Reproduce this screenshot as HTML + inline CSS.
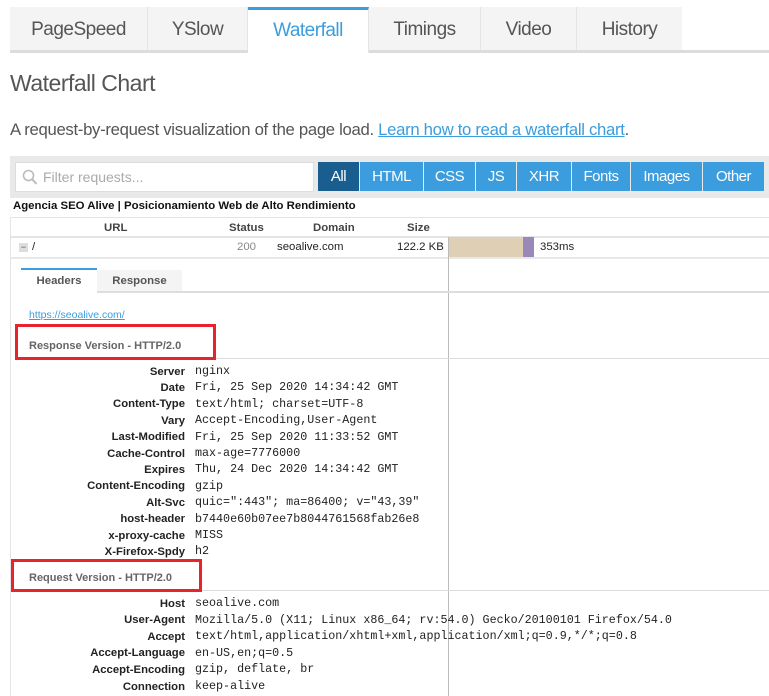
<!DOCTYPE html>
<html><head><style>
*{margin:0;padding:0;box-sizing:border-box}
body{width:769px;height:696px;overflow:hidden;background:#fff;font-family:"Liberation Sans",sans-serif;color:#333;position:relative}
.a{position:absolute}
.tab{position:absolute;top:7px;height:43px;background:#f4f4f4;border-right:1px solid #e4e4e4;font-size:19px;color:#555;text-align:center;line-height:46px;letter-spacing:-0.5px}
.btn{position:absolute;top:162px;height:29px;background:#3b9ddd;color:#fff;font-size:15px;text-align:center;line-height:29px;letter-spacing:-0.5px}
.k{position:absolute;left:0;width:185px;text-align:right;font-weight:bold;font-size:11.3px;color:#222;margin-top:1.5px}
.v{position:absolute;left:195px;font-family:"Liberation Mono",monospace;font-size:11.7px;color:#222;white-space:nowrap}
.sec{position:absolute;font-weight:bold;font-size:11px;color:#666}
.red{position:absolute;border:3px solid #e8232e}
</style></head><body>
<div class="a" style="left:10px;top:50px;width:759px;height:3px;background:#dcdcdc"></div>
<div class="tab" style="left:10px;width:138px">PageSpeed</div>
<div class="tab" style="left:148px;width:100px">YSlow</div>
<div class="tab" style="left:248px;width:121px;background:#fff;border-top:3px solid #3b9ddd;height:46px;line-height:42px;color:#3b9ddd">Waterfall</div>
<div class="tab" style="left:369px;width:112px">Timings</div>
<div class="tab" style="left:481px;width:96px">Video</div>
<div class="tab" style="left:577px;width:105px;border-right:none">History</div>
<div class="a" style="left:10px;top:70px;font-size:23px;color:#555;letter-spacing:-0.5px">Waterfall Chart</div>
<div class="a" style="left:10px;top:120px;font-size:16.7px;color:#555;letter-spacing:-0.3px">A request-by-request visualization of the page load. <span style="color:#3b9ddd;text-decoration:underline">Learn how to read a waterfall chart</span>.</div>
<div class="a" style="left:10px;top:156px;width:759px;height:42px;background:#e8eaea"></div>
<div class="a" style="left:15px;top:162px;width:299px;height:30px;background:#fff;border:1px solid #ddd"></div>
<svg class="a" style="left:22px;top:169px" width="16" height="17"><circle cx="6.5" cy="6.5" r="5" fill="none" stroke="#bbb" stroke-width="1.6"/><line x1="10" y1="10" x2="14.5" y2="15" stroke="#bbb" stroke-width="2"/></svg>
<div class="a" style="left:43px;top:169px;font-size:14px;color:#aaa">Filter requests...</div>
<div class="btn" style="left:318px;width:41px;background:#1a5e8f">All</div>
<div class="btn" style="left:360px;width:63px">HTML</div>
<div class="btn" style="left:424px;width:51px">CSS</div>
<div class="btn" style="left:476px;width:40px">JS</div>
<div class="btn" style="left:517px;width:54px">XHR</div>
<div class="btn" style="left:572px;width:58px">Fonts</div>
<div class="btn" style="left:631px;width:71px">Images</div>
<div class="btn" style="left:703px;width:61px">Other</div>
<div class="a" style="left:13px;top:200px;font-size:11.4px;font-weight:bold;color:#111">Agencia SEO Alive | Posicionamiento Web de Alto Rendimiento</div>
<div class="a" style="left:10px;top:217px;width:759px;height:1px;background:#e4e4e4"></div>
<div class="a" style="left:10px;top:217px;width:1px;height:479px;background:#e4e4e4"></div>
<div class="a" style="left:104px;top:222px;font-size:11.4px;font-weight:bold;color:#444">URL</div>
<div class="a" style="left:229px;top:222px;font-size:11.4px;font-weight:bold;color:#444">Status</div>
<div class="a" style="left:313px;top:222px;font-size:11.4px;font-weight:bold;color:#444">Domain</div>
<div class="a" style="left:407px;top:222px;font-size:11.4px;font-weight:bold;color:#444">Size</div>
<div class="a" style="left:10px;top:236px;width:759px;height:2px;background:#e4e4e4"></div>
<div class="a" style="left:19px;top:243px;width:9px;height:9px;background:#ddd;font-size:9px;line-height:8px;text-align:center;color:#555">−</div>
<div class="a" style="left:32px;top:241px;font-size:11.4px;color:#222">/</div>
<div class="a" style="left:237px;top:241px;font-size:11.4px;color:#888">200</div>
<div class="a" style="left:277px;top:241px;font-size:11.4px;color:#222">seoalive.com</div>
<div class="a" style="left:397px;top:241px;font-size:11.4px;color:#222">122.2 KB</div>
<div class="a" style="left:448px;top:237px;width:75px;height:20px;background:#dfd0b5"></div>
<div class="a" style="left:523px;top:237px;width:11px;height:20px;background:#9a88b8"></div>
<div class="a" style="left:540px;top:241px;font-size:11.4px;color:#222">353ms</div>
<div class="a" style="left:10px;top:257px;width:759px;height:2px;background:#e8e8e8"></div>
<div class="a" style="left:448px;top:237px;width:1px;height:459px;background:#bbb"></div>
<div class="a" style="left:21px;top:268px;width:76px;height:25px;background:#fff;border-top:2px solid #3b9ddd;font-size:11.4px;font-weight:bold;color:#555;text-align:center;line-height:22px">Headers</div>
<div class="a" style="left:97px;top:270px;width:85px;height:23px;background:#f4f4f4;font-size:11.4px;font-weight:bold;color:#555;text-align:center;line-height:22px">Response</div>
<div class="a" style="left:97px;top:291px;width:672px;height:2px;background:#ddd"></div>
<div class="a" style="left:29px;top:309px;font-size:10.5px;color:#3b9ddd;text-decoration:underline">https://seoalive.com/</div>
<div class="a" style="left:28px;top:358px;width:741px;height:1px;background:#ddd"></div>
<div class="sec" style="left:29px;top:340px">Response Version - HTTP/2.0</div>
<div class="red" style="left:15px;top:324px;width:201px;height:36px"></div>
<div class="a" style="left:0;top:364px;width:769px">
<div class="k" style="top:0">Server</div><div class="v" style="top:0">nginx</div>
<div class="k" style="top:16.4px">Date</div><div class="v" style="top:16.4px">Fri, 25 Sep 2020 14:34:42 GMT</div>
<div class="k" style="top:32.8px">Content-Type</div><div class="v" style="top:32.8px">text/html; charset=UTF-8</div>
<div class="k" style="top:49.2px">Vary</div><div class="v" style="top:49.2px">Accept-Encoding,User-Agent</div>
<div class="k" style="top:65.6px">Last-Modified</div><div class="v" style="top:65.6px">Fri, 25 Sep 2020 11:33:52 GMT</div>
<div class="k" style="top:82px">Cache-Control</div><div class="v" style="top:82px">max-age=7776000</div>
<div class="k" style="top:98.4px">Expires</div><div class="v" style="top:98.4px">Thu, 24 Dec 2020 14:34:42 GMT</div>
<div class="k" style="top:114.8px">Content-Encoding</div><div class="v" style="top:114.8px">gzip</div>
<div class="k" style="top:131.2px">Alt-Svc</div><div class="v" style="top:131.2px">quic=":443"; ma=86400; v="43,39"</div>
<div class="k" style="top:147.6px">host-header</div><div class="v" style="top:147.6px">b7440e60b07ee7b8044761568fab26e8</div>
<div class="k" style="top:164px">x-proxy-cache</div><div class="v" style="top:164px">MISS</div>
<div class="k" style="top:180.4px">X-Firefox-Spdy</div><div class="v" style="top:180.4px">h2</div>
</div>
<div class="a" style="left:28px;top:590px;width:741px;height:1px;background:#ddd"></div>
<div class="sec" style="left:29px;top:572px">Request Version - HTTP/2.0</div>
<div class="red" style="left:11px;top:559px;width:191px;height:33px"></div>
<div class="a" style="left:0;top:596px;width:769px">
<div class="k" style="top:0">Host</div><div class="v" style="top:0">seoalive.com</div>
<div class="k" style="top:16.6px">User-Agent</div><div class="v" style="top:16.6px">Mozilla/5.0 (X11; Linux x86_64; rv:54.0) Gecko/20100101 Firefox/54.0</div>
<div class="k" style="top:33.2px">Accept</div><div class="v" style="top:33.2px">text/html,application/xhtml+xml,application/xml;q=0.9,*/*;q=0.8</div>
<div class="k" style="top:49.8px">Accept-Language</div><div class="v" style="top:49.8px">en-US,en;q=0.5</div>
<div class="k" style="top:66.4px">Accept-Encoding</div><div class="v" style="top:66.4px">gzip, deflate, br</div>
<div class="k" style="top:83px">Connection</div><div class="v" style="top:83px">keep-alive</div>
</div>
</body></html>
